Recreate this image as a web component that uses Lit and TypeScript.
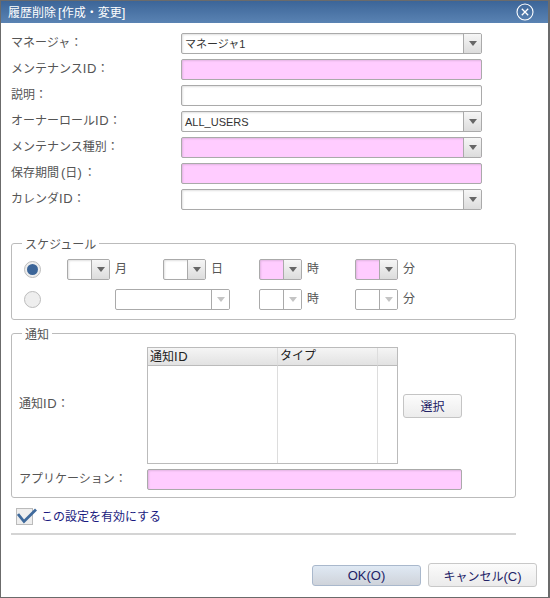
import { LitElement, html, css } from "lit";
import { customElement } from "lit/decorators.js";

const arrow = html`<svg class="tri" width="8" height="5" viewBox="0 0 8 5"><path d="M0 0H8L4 5Z"></path></svg>`;

@customElement("app-root")
export class AppRoot extends LitElement {
  static styles = css`
    :host { display: block; width: 550px; height: 598px; font-family: "Liberation Sans", "Noto Sans CJK JP", sans-serif; font-size: 12px; color: #555; }
    * { box-sizing: border-box; }
    .window { width: 550px; height: 598px; display: flex; flex-direction: column; background: #fff; border: 1px solid #6b6b6b; border-right-width: 2px; }
    .title { height: 22px; flex: none; display: flex; align-items: center; justify-content: space-between; padding: 0 14px 0 7px; background: linear-gradient(#3c6598, #5a83b3); color: #fff; font-size: 12px; }
    .title > span { padding-bottom: 1px; }
    .br { font-size: 13px; }
    .open { padding-left: 2px; }
    .shut { padding-right: 2px; }
    .close { display: block; }
    .body { flex: 1; display: flex; flex-direction: column; padding: 10px 0 0 10px; }
    .form { display: grid; grid-template-columns: 170px 301px; grid-auto-rows: 21px; row-gap: 5px; align-items: center; }
    .label { line-height: 16px; white-space: nowrap; }
    .form .label { margin-top: -1px; }
    .lat { font-size: 13px; letter-spacing: .5px; }
    .ctl { height: 21px; display: flex; border: 1px solid #aaa; border-radius: 2px; background: #fff; box-shadow: inset 1px 1px 2px rgba(0,0,0,.12); overflow: hidden; }
    .pink { background: #ffccff; }
    .val { flex: 1; min-width: 0; padding: 0 3px; line-height: 20px; font-size: 11px; color: #333; white-space: nowrap; }
    .drop { flex: none; width: 18px; display: flex; align-items: center; justify-content: center; border-left: 1px solid #aaa; background: linear-gradient(#f6f6f6, #dcdcdc); }
    .tri { fill: #666; }
    .off { box-shadow: none; }
    .off .drop { background: #fff; }
    .off .tri { fill: #c4c4c4; }
    fieldset { margin: 0; min-width: 0; border: 1px solid #bbb; border-radius: 3px; width: 505px; }
    legend { padding: 0 3px; line-height: 16px; }
    legend span { display: block; transform: translateY(2px); }
    .sched { margin-top: 25px; padding: 8px 0 9px 12px; }
    .sched legend { margin-left: -2px; }
    .sched-grid { display: grid; grid-template-columns: 43px repeat(4, 96px); grid-auto-rows: 21px; row-gap: 9px; align-items: center; }
    .cell { display: flex; align-items: center; gap: 5px; }
    .cell > span { padding-bottom: 4px; }
    .cell .ctl { width: 43px; }
    .wide { grid-column: span 2; }
    .wide .ctl { width: 115px; margin-left: 48px; }
    .radio { width: 17px; height: 17px; border-radius: 50%; border: 1px solid #bcbcbc; background: #eee; display: flex; align-items: center; justify-content: center; }
    .radio i { width: 11px; height: 11px; border-radius: 50%; background: #3c6598; }
    .notify { margin-top: 5px; padding: 6px 0 7px 7px; }
    .notify legend { margin-left: 3px; }
    .notify-grid { display: grid; grid-template-columns: 128px 251px 59px; column-gap: 0; align-items: center; }
    .id-label { padding-bottom: 4px; }
    .table { height: 117px; border: 1px solid #bbb; display: grid; grid-template-columns: 130px 100px 1fr; grid-template-rows: 18px 1fr; }
    .th { background: linear-gradient(#f5f5f5, #e2e2e2); border-bottom: 1px solid #bbb; border-right: 1px solid #ddd; line-height: 17px; padding-left: 2px; color: #222; }
    .td { border-right: 1px solid #ddd; }
    .th:nth-child(3), .td:last-child { border-right: none; }
    .sel { grid-column: 3; width: 59px; height: 24px; margin-left: 5px; border: 1px solid #c4c4c4; border-radius: 3px; background: linear-gradient(#fcfcfc, #ececec); color: #226; display: flex; align-items: center; justify-content: center; font: inherit; padding: 0; }
    .app { grid-column: 2 / span 2; width: 315px; height: 21px; margin-top: 5px; }
    .app-label { margin-top: 3px; }
    .check { display: flex; align-items: center; gap: 8px; margin: 9px 0 0 5px; color: #1a1a80; height: 18px; }
    .check > span:last-child { padding-bottom: 2px; }
    .box { position: relative; width: 17px; height: 17px; border: 1px solid #bbb; background: #eee; flex: none; }
    .box svg { position: absolute; left: 0; top: -2px; }
    .sep { width: 505px; height: 2px; background: #d4d4d4; margin-top: 8px; }
    .footer { margin-top: auto; display: flex; align-items: center; justify-content: flex-end; gap: 7px; padding: 0 11px 10px 0; }
    .btn { width: 109px; height: 24px; font: inherit; color: #226; border: 1px solid #c8c8c8; border-radius: 3px; background: linear-gradient(#fbfbfb, #ebebeb); padding: 0; }
    .ok { height: 21px; font-size: 13px; border-color: #a9b8cc; background: linear-gradient(#dfe9f4, #cfd3da); }
    .btn .c { font-size: 13px; }
  `;

  private sel(pink = false, off = false, text = "") {
    return html`<div class="ctl ${pink ? "pink" : ""} ${off ? "off" : ""}"><span class="val">${text}</span><span class="drop">${arrow}</span></div>`;
  }
  private input(pink = false) {
    return html`<div class="ctl ${pink ? "pink" : ""}"></div>`;
  }

  render() {
    return html`<div class="window">
      <div class="title">
        <span>履歴削除<span class="br open">[</span>作成・変更<span class="br shut">]</span></span>
        <svg class="close" width="18" height="18" viewBox="0 0 18 18" fill="none" stroke="#fff"><circle cx="9" cy="9" r="8" stroke-width="1.1"></circle><path d="M5.8 5.8L12.2 12.2M12.2 5.8L5.8 12.2" stroke-width="1.3"></path></svg>
      </div>
      <div class="body">
        <div class="form">
          <span class="label">マネージャ：</span>${this.sel(false, false, "マネージャ1")}
          <span class="label">メンテナンス<span class="lat">ID</span>：</span>${this.input(true)}
          <span class="label">説明：</span>${this.input()}
          <span class="label">オーナーロール<span class="lat">ID</span>：</span>${this.sel(false, false, "ALL_USERS")}
          <span class="label">メンテナンス種別：</span>${this.sel(true)}
          <span class="label">保存期間<span class="br open">(</span>日<span class="br shut">)</span>：</span>${this.input(true)}
          <span class="label">カレンダ<span class="lat">ID</span>：</span>${this.sel()}
        </div>
        <fieldset class="sched">
          <legend><span>スケジュール</span></legend>
          <div class="sched-grid">
            <div class="radio"><i></i></div>
            <div class="cell">${this.sel()}<span>月</span></div>
            <div class="cell">${this.sel()}<span>日</span></div>
            <div class="cell">${this.sel(true)}<span>時</span></div>
            <div class="cell">${this.sel(true)}<span>分</span></div>
            <div class="radio"></div>
            <div class="cell wide">${this.sel(false, true)}</div>
            <div class="cell">${this.sel(false, true)}<span>時</span></div>
            <div class="cell">${this.sel(false, true)}<span>分</span></div>
          </div>
        </fieldset>
        <fieldset class="notify">
          <legend><span>通知</span></legend>
          <div class="notify-grid">
            <span class="label id-label">通知<span class="lat">ID</span>：</span>
            <div class="table">
              <div class="th">通知<span class="lat">ID</span></div><div class="th">タイプ</div><div class="th"></div>
              <div class="td"></div><div class="td"></div><div class="td"></div>
            </div>
            <button class="sel">選択</button>
            <span class="label app-label">アプリケーション：</span>
            <div class="ctl pink app"></div>
          </div>
        </fieldset>
        <div class="check">
          <span class="box"><svg width="22" height="18" viewBox="0 0 22 18" fill="none"><path d="M1 7L7 14.5L19 2.5" stroke="#3f6a9c" stroke-width="2.8"></path></svg></span>
          <span>この設定を有効にする</span>
        </div>
        <div class="sep"></div>
        <div class="footer">
          <button class="btn ok">OK(O)</button>
          <button class="btn">キャンセル<span class="c">(C)</span></button>
        </div>
      </div>
    </div>`;
  }
}
